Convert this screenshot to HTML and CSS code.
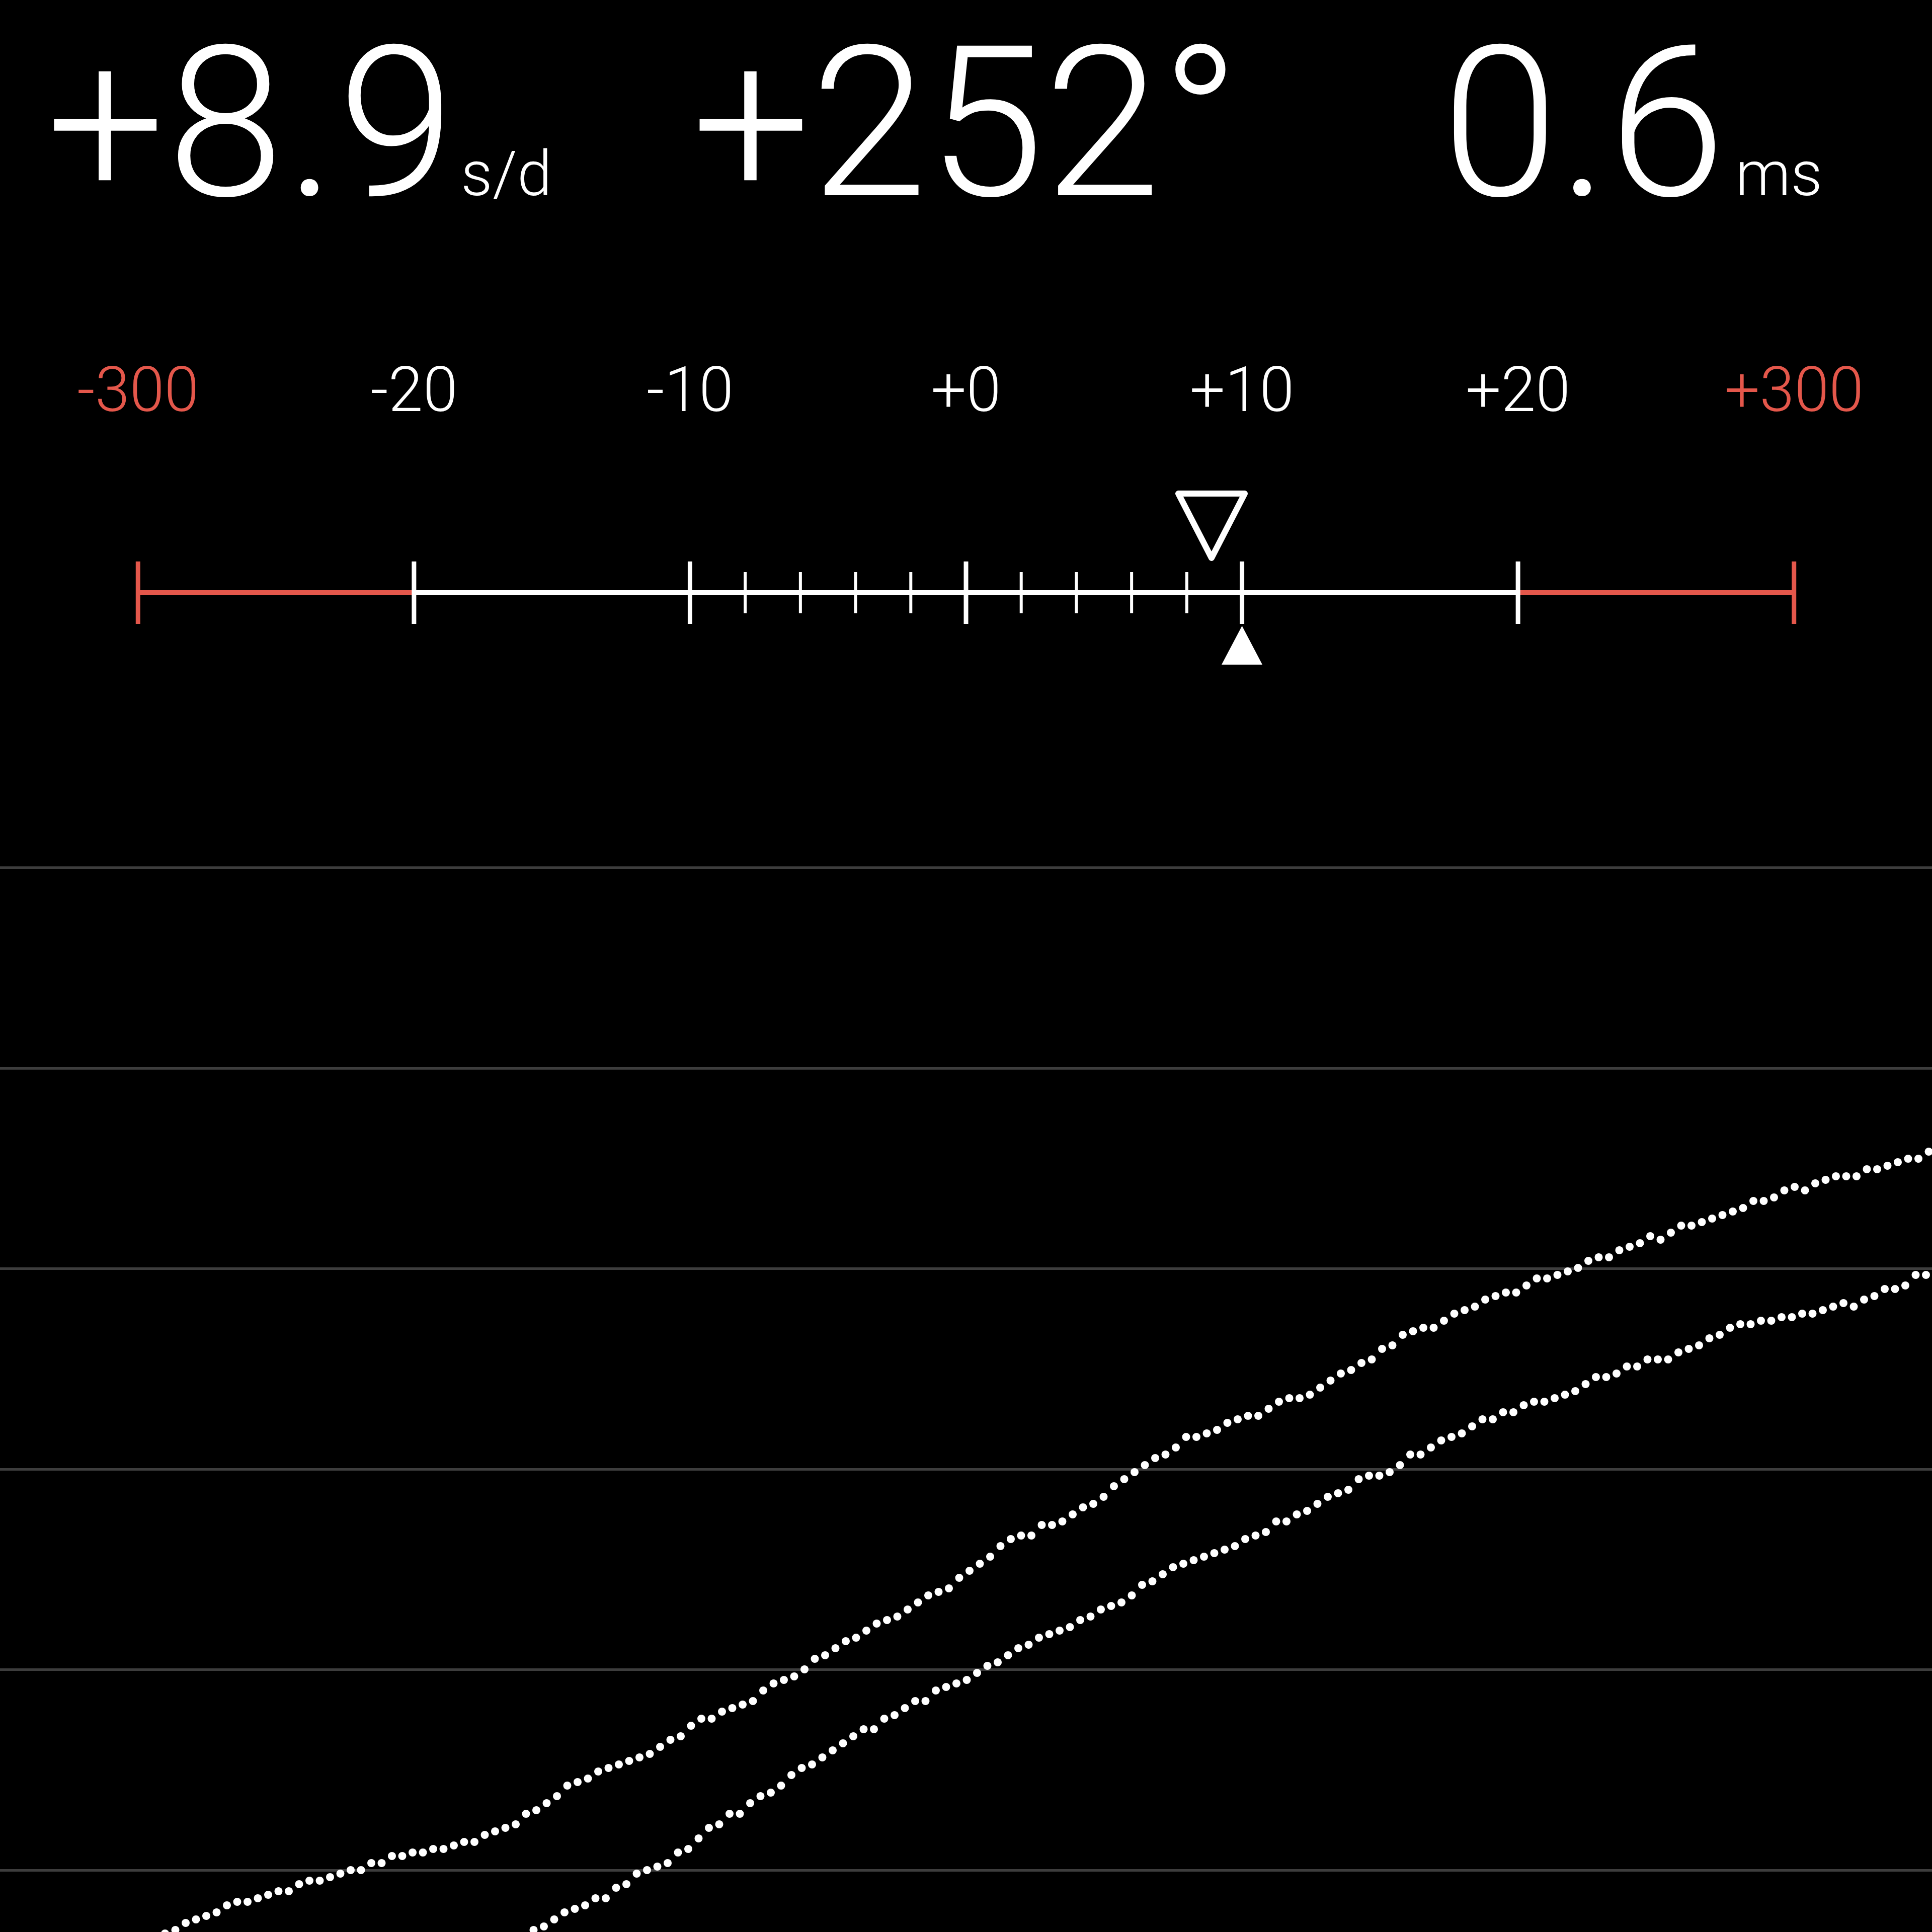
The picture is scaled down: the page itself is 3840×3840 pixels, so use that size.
FILE: index.html
```html
<!DOCTYPE html>
<html lang="en">
<head>
  <meta charset="UTF-8">
  <title>Timegrapher</title>
  <link rel="stylesheet" href="styles.css">
</head>
<body>

  <div class="readouts">
    <div class="readout rate"><span class="value">+8.9</span><span class="unit">s/d</span></div>
    <div class="readout amp"><span class="value">+252°</span></div>
    <div class="readout beat"><span class="value">0.6</span><span class="unit unit-ms">ms</span></div>
  </div>

  <div class="scale-labels">
    <span class="warn">-300</span>
    <span>-20</span>
    <span>-10</span>
    <span>+0</span>
    <span>+10</span>
    <span>+20</span>
    <span class="warn">+300</span>
  </div>

  <svg class="gauge" viewBox="0 960 3840 380">
    <line class="bar warn-stroke" x1="274.3" y1="1178" x2="822.9" y2="1178"/>
    <line class="bar" x1="822.9" y1="1178" x2="3017.1" y2="1178"/>
    <line class="bar warn-stroke" x1="3017.1" y1="1178" x2="3565.7" y2="1178"/>
    <g id="ticks"></g>
    <polygon class="marker-avg" points="2342,981 2474,981 2408,1109"/>
    <polygon class="marker-now" points="2468.6,1244 2428,1321 2509,1321"/>
  </svg>

  <div class="chart">
    <div class="row"></div>
    <div class="row"></div>
    <div class="row"></div>
    <div class="row"></div>
    <div class="row"></div>
    <div class="row"></div>
    <svg id="trace" class="trace" viewBox="0 1700 3840 2140"></svg>
  </div>

  <script>
    var NS = 'http://www.w3.org/2000/svg';
    var step = 3840 / 7;

    // scale ticks: big ones on every label, small ones between -10 and +10
    var ticks = document.getElementById('ticks');
    for (var i = 0; i < 7; i++) {
      var x = step / 2 + i * step;
      var t = document.createElementNS(NS, 'line');
      t.setAttribute('x1', x); t.setAttribute('x2', x);
      t.setAttribute('y1', 1116); t.setAttribute('y2', 1240);
      t.setAttribute('class', (i === 0 || i === 6) ? 'tick warn-stroke' : 'tick');
      ticks.appendChild(t);
    }
    for (var j = 1; j < 10; j++) {
      if (j === 5) continue;
      var sx = step / 2 + 2 * step + j * step / 5;
      var s = document.createElementNS(NS, 'line');
      s.setAttribute('x1', sx); s.setAttribute('x2', sx);
      s.setAttribute('y1', 1137); s.setAttribute('y2', 1219);
      s.setAttribute('class', 'tick-small');
      ticks.appendChild(s);
    }

    // two traces, points read off a 1568px wide capture
    var curves = [
      { start: 328, pts: [[140,1566],[180,1550],[230,1533],[300,1515],[330,1505],[400,1490],[470,1445],[530,1420],[569,1397],[600,1385],[650,1355],[700,1325],[760,1295],[820,1250],[880,1225],[920,1195],[960,1170],[1040,1140],[1100,1110],[1150,1080],[1210,1055],[1280,1028],[1370,995],[1440,970],[1500,955],[1568,935]] },
      { start: 1040, pts: [[430,1568],[480,1545],[540,1510],[569,1490],[600,1470],[650,1435],[700,1405],[760,1375],[800,1355],[830,1335],[900,1305],[960,1270],[1010,1250],[1060,1225],[1110,1200],[1170,1170],[1200,1155],[1260,1135],[1320,1110],[1370,1098],[1410,1075],[1450,1070],[1500,1060],[1540,1045],[1568,1030]] }
    ];
    var k = 3840 / 1568;
    var seed = 11;
    function rnd() {
      seed = (seed * 9301 + 49297) % 233280;
      return seed / 233280;
    }
    var trace = document.getElementById('trace');
    curves.forEach(function (c) {
      var pts = c.pts.map(function (p) { return [p[0] * k, p[1] * k]; });
      for (var x = c.start; x <= 3850; x += 20.5) {
        var n = 0;
        while (n < pts.length - 2 && pts[n + 1][0] < x) n++;
        var a = pts[n], b = pts[n + 1];
        var y = a[1] + (b[1] - a[1]) * (x - a[0]) / (b[0] - a[0]);
        y = Math.round((y + (rnd() - 0.5) * 12) / 7) * 7;
        var dot = document.createElementNS(NS, 'circle');
        dot.setAttribute('cx', x.toFixed(1));
        dot.setAttribute('cy', y);
        dot.setAttribute('r', 8);
        trace.appendChild(dot);
      }
    });
  </script>

</body>
</html>
```

FILE: styles.css
```css
html, body {
  margin: 0;
  padding: 0;
  background-color: #000;
}
body {
  font-family: "Roboto", "Liberation Sans", sans-serif;
  font-weight: 300;
  color: #fff;
  width: 3840px;
  height: 3840px;
}
.readouts {
  display: grid;
  grid-template-columns: repeat(3, 1fr);
  height: 640px;
  padding-top: 36px;
  box-sizing: border-box;
}
.readout {
  display: flex;
  align-items: baseline;
  line-height: 1;
}
.readout .value {
  font-size: 418px;
}
.readout .unit {
  font-size: 124px;
  margin-left: 8px;
}
.readout .unit-ms {
  margin-left: 20px;
}
.rate {
  justify-self: start;
  padding-left: 92px;
}
.rate .value {
  letter-spacing: 4px;
}
.amp {
  justify-self: center;
}
.beat {
  justify-self: end;
  padding-right: 218px;
}
.scale-labels {
  display: flex;
  height: 320px;
  padding-top: 73px;
  box-sizing: border-box;
  font-size: 124px;
  line-height: 1;
}
.scale-labels span {
  flex: 1;
  text-align: center;
}
.scale-labels .warn {
  color: #e4574b;
}
.gauge {
  display: block;
  width: 3840px;
  height: 380px;
}
.gauge .bar {
  stroke: #fff;
  stroke-width: 10;
}
.gauge .tick {
  stroke: #fff;
  stroke-width: 9;
}
.gauge .tick-small {
  stroke: #fff;
  stroke-width: 6;
}
.gauge .warn-stroke {
  stroke: #e4574b;
}
.marker-avg {
  fill: none;
  stroke: #fff;
  stroke-width: 12;
  stroke-linejoin: round;
}
.marker-now {
  fill: #fff;
}
.chart {
  position: relative;
  margin-top: 360px;
  height: 2140px;
  padding-top: 22px;
  box-sizing: border-box;
  overflow: hidden;
}
.chart .row {
  height: 398.6px;
  border-top: 5px solid #3d3d3d;
  box-sizing: border-box;
}
.trace {
  position: absolute;
  top: 0;
  left: 0;
  width: 3840px;
  height: 2140px;
  fill: #fff;
}
```
